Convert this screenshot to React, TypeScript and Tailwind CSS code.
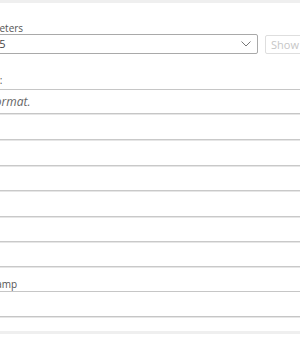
import React from 'react';

// Clipped settings form: the panel is scrolled a little to the right,
// so the left side of every field sits outside the view.
const rows = [26, 26, 25, 26, 25, 25];

export default function App() {
    return (
        <div className="w-[300px] h-[350px] overflow-hidden bg-white font-['Open_Sans',sans-serif]">
            <div className="border-t-[3px] border-[#efefef]" />

            <div className="-ml-[12px] w-[360px] flex flex-col">
                {/* PARAMETERS */}
                <label className="mt-[19px] h-[12px] text-[10px] leading-[12px] text-[#555] -ml-[19px] whitespace-nowrap">
                    Parameters
                </label>
                <div className="flex items-center gap-[7px]">
                    <div className="h-[20px] w-[270px] flex items-center justify-between border border-[#a9a9a9] rounded-[2px] pl-[4px] pr-[6px] text-[11px] text-[#444]">
                        <span>25</span>
                        <svg width="10" height="6" viewBox="0 0 10 6" fill="none">
                            <path d="M0.5 0.5L5 5L9.5 0.5" stroke="#777" strokeWidth="1" />
                        </svg>
                    </div>
                    <button className="h-[19px] px-[5px] border border-[#dedede] rounded-[2px] text-[11px] leading-none text-[#c6c6c6] whitespace-nowrap">
                        Show all
                    </button>
                </div>

                {/* FORMAT */}
                <label className="mt-[20px] h-[12px] text-[10px] leading-[12px] text-[#555] -ml-[22px] whitespace-nowrap">
                    Format:
                </label>
                <div className="mt-[3px] h-[25px] flex items-center border-y border-[#c6c6c6] shadow-[0_1px_0_#e6e6e6] text-[12px] italic text-[#666] -ml-[22px] pl-[4px] whitespace-nowrap">
                    ISO format.
                </div>
                {rows.map((h, i) => (
                    <div
                        key={i}
                        style={{ height: h }}
                        className="border-b border-[#c9c9c9] shadow-[0_1px_0_#e6e6e6]"
                    />
                ))}

                {/* TIMESTAMP */}
                <label className="mt-[11px] h-[12px] text-[10px] leading-[12px] text-[#555] -ml-[23px] whitespace-nowrap">
                    Timestamp
                </label>
                <div className="mt-[1px] h-[26px] border-y border-[#c6c6c6] shadow-[0_1px_0_#e6e6e6]" />
            </div>

            <div className="mt-[14px] border-t-[3px] border-[#efefef]" />
        </div>
    );
}
